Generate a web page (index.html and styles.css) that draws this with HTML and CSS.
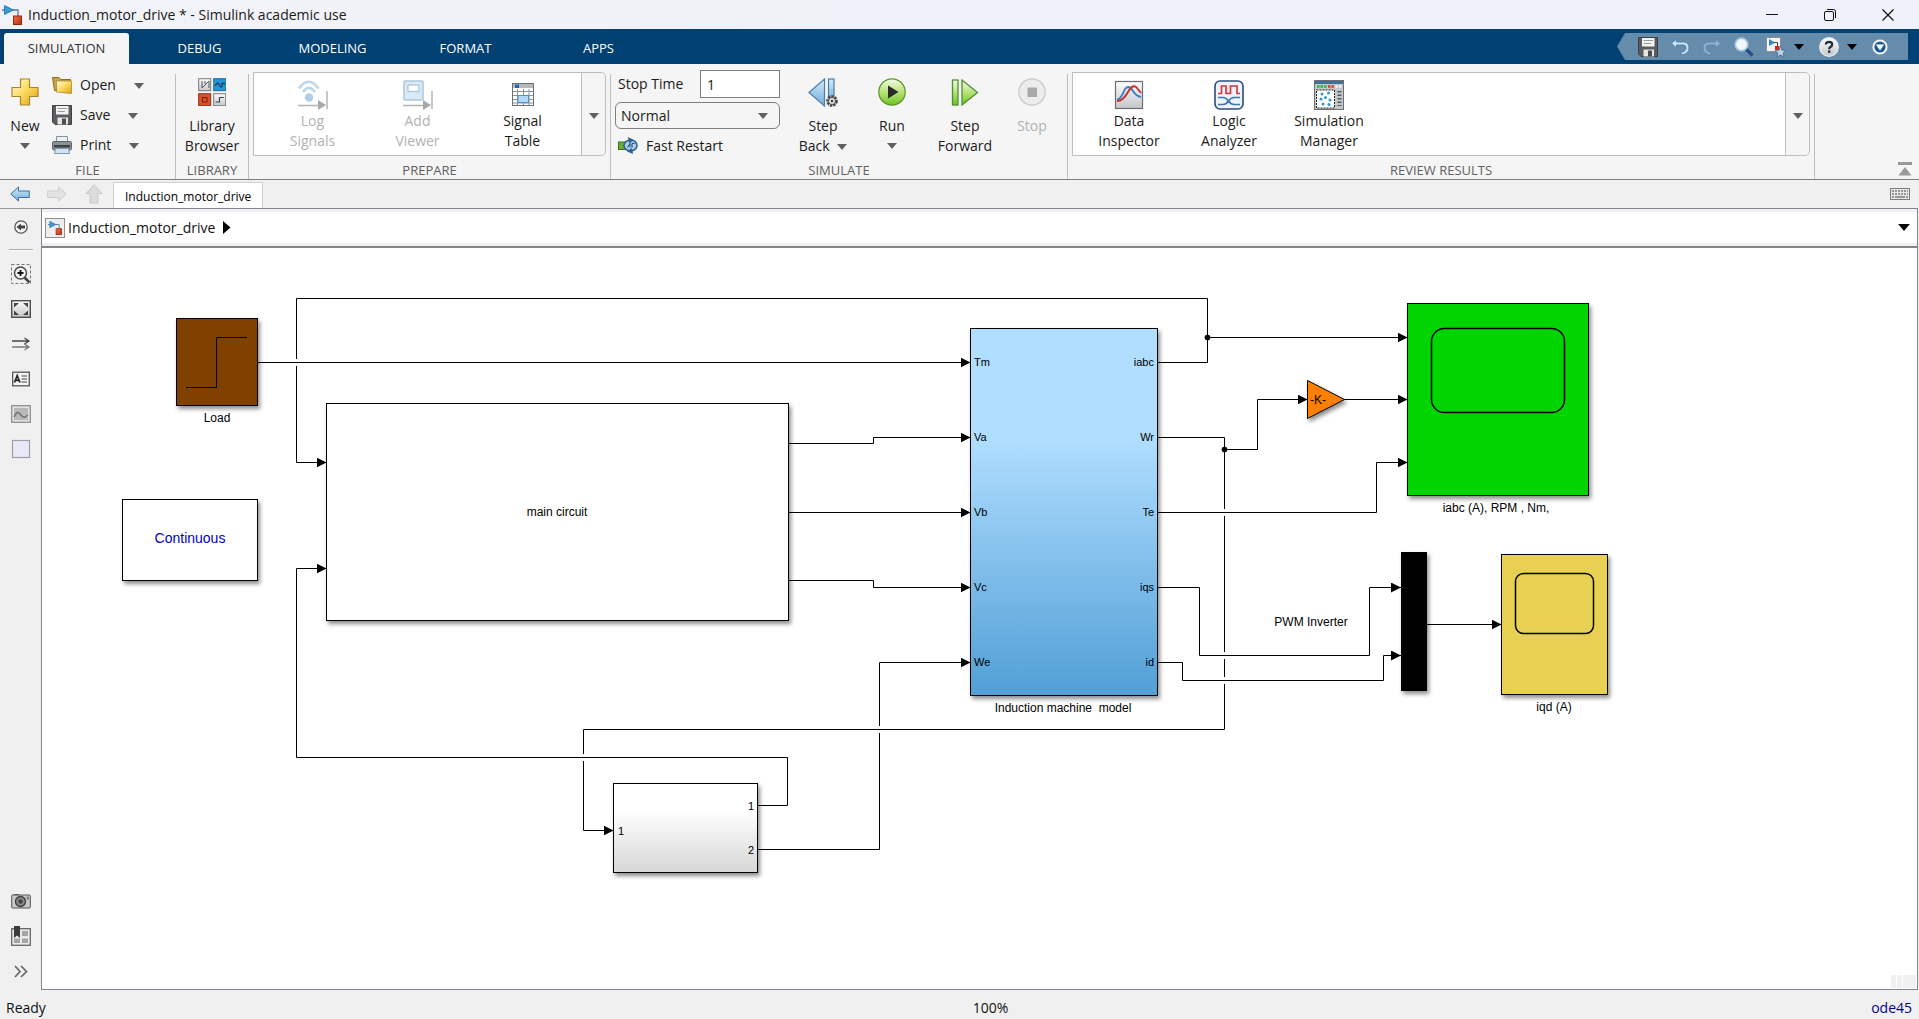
FILE: index.html
```html
<!DOCTYPE html>
<html lang="en">
<head>
<meta charset="utf-8">
<title>Induction_motor_drive * - Simulink academic use</title>
<link rel="stylesheet" href="styles.css">
</head>
<body>
<svg class="sprite" aria-hidden="true">
  <defs>
    <linearGradient id="gold" x1="0" y1="0" x2="1" y2="1"><stop offset="0" stop-color="#fffbd8"/><stop offset=".5" stop-color="#fbd85e"/><stop offset="1" stop-color="#e0a010"/></linearGradient>
    <linearGradient id="sky" x1="0" y1="0" x2="0" y2="1"><stop offset="0" stop-color="#d5ebfa"/><stop offset="1" stop-color="#6faede"/></linearGradient>
    <linearGradient id="leaf" x1="0" y1="0" x2="0" y2="1"><stop offset="0" stop-color="#f4fbe8"/><stop offset=".5" stop-color="#b9e27a"/><stop offset="1" stop-color="#6cc21f"/></linearGradient>
    <linearGradient id="steel" x1="0" y1="0" x2="0" y2="1"><stop offset="0" stop-color="#fdfdfd"/><stop offset="1" stop-color="#c4c6c9"/></linearGradient>
    <linearGradient id="red" x1="0" y1="0" x2="1" y2="1"><stop offset="0" stop-color="#f0714a"/><stop offset="1" stop-color="#b62f0c"/></linearGradient>
    <symbol id="caret" viewBox="0 0 10 6"><path d="M0 0H10L5 6Z" fill="currentColor"/></symbol>
    <symbol id="model" viewBox="0 0 20 20"><path d="M0 5H3M11 5H16V11" fill="none" stroke="#5c7a96" stroke-width="1.3"/><path d="M2.500 .5V9.500L11.500 5Z" fill="#3b9bd6" stroke="#1f6fa8" stroke-width=".8"/><rect x="11.500" y="11" width="8" height="8.500" fill="url(#red)" stroke="#8e2a10"/></symbol>
    <symbol id="disk" viewBox="0 0 20 20"><path d="M.5.500H19.500V19.500H3L.5 17Z" fill="#5a5c60" stroke="#3d3f42"/><rect x="4" y="1" width="12.500" height="8.500" fill="#f3f3f3"/><path d="M5.500 3.500H15M5.500 6.500H13" stroke="#9a9a9a"/><rect x="5.500" y="12.500" width="10.500" height="7" fill="#e6e6e6"/><rect x="10" y="13.500" width="4" height="6" fill="#4a4c50"/></symbol>
  </defs>
</svg>

<header class="titlebar">
  <svg class="app-icon"><use href="#model"/></svg>
  <h1 class="title">Induction_motor_drive * - Simulink academic use</h1>
  <div class="window-buttons">
    <button class="window-button" aria-label="Minimize"><svg viewBox="0 0 12 12"><path d="M0 5.500H12" stroke="#111"/></svg></button>
    <button class="window-button" aria-label="Restore"><svg viewBox="0 0 12 12"><rect x=".5" y="2.500" width="9" height="9" rx="1.500" fill="none" stroke="#111"/><path d="M3 .5H9.500Q11.500.5 11.500 2.500V9" fill="none" stroke="#111"/></svg></button>
    <button class="window-button" aria-label="Close"><svg viewBox="0 0 12 12"><path d="M.5.500 11.500 11.500M11.500.500.500 11.500" stroke="#111" stroke-width="1.200"/></svg></button>
  </div>
</header>

<nav class="ribbon-tabs">
  <button class="ribbon-tab active">SIMULATION</button>
  <button class="ribbon-tab">DEBUG</button>
  <button class="ribbon-tab">MODELING</button>
  <button class="ribbon-tab">FORMAT</button>
  <button class="ribbon-tab">APPS</button>
  <div class="quick-access">
    <button aria-label="Save"><svg class="icon-20"><use href="#disk"/></svg></button>
    <button aria-label="Undo"><svg class="icon-20" viewBox="0 0 20 20"><path d="M6.500 2 1.500 6.500 6.500 11V8H13.500Q16 8 16 11Q16 14.500 11 15.500V18Q19 17 19 11Q19 5.500 14 5H6.500Z" fill="#c9e2f6" stroke="#4779a5" stroke-width=".8"/></svg></button>
    <button aria-label="Redo"><svg class="icon-20" viewBox="0 0 20 20"><path d="M13.500 2 18.500 6.500 13.500 11V8H6.500Q4 8 4 11Q4 14.500 9 15.500V18Q1 17 1 11Q1 5.500 6 5H13.500Z" fill="#8fb0cb" stroke="#5c87ab" stroke-width=".8"/></svg></button>
    <button aria-label="Find"><svg class="icon-20" viewBox="0 0 20 20"><path d="M11.500 11.500 18.500 18.500" stroke="#234f86" stroke-width="3.200"/><circle cx="7.500" cy="7.500" r="6.300" fill="#f1f8fd" stroke="#a9c3d8" stroke-width="1.800"/></svg></button>
    <span class="split">
      <button aria-label="Favorites"><svg class="icon-20" viewBox="0 0 20 20"><rect x=".5" y=".5" width="14" height="14" fill="#f3f3f5" stroke="#8b8f94"/><path d="M3 2V9L9 5.500Z" fill="#2e87c6"/><path d="M8 5.500H11.500V9" stroke="#444" fill="none"/><rect x="9" y="9" width="4.500" height="4" fill="#cf2d12"/><path d="M14.500 9.500 16 13.300 20 13.600 17 16.100 18 20 14.500 17.800 11 20 12 16.100 9 13.600 13 13.300Z" fill="#bcd5ec" stroke="#3e6690" stroke-width=".7"/></svg></button>
      <button aria-label="Favorites menu"><svg class="caret"><use href="#caret"/></svg></button>
    </span>
    <span class="split">
      <button aria-label="Help"><svg class="icon-20" viewBox="0 0 20 20"><circle cx="10" cy="10" r="9.300" fill="url(#steel)" stroke="#e9f1f7" stroke-width="1.200"/><path d="M6.800 7.500Q7 4.800 10 4.800Q13.200 4.800 13.200 7.400Q13.200 9 11.300 10Q10.200 10.700 10.200 12.200" fill="none" stroke="#222b3a" stroke-width="2.200"/><rect x="9" y="13.400" width="2.400" height="2.400" fill="#222b3a"/></svg></button>
      <button aria-label="Help menu"><svg class="caret"><use href="#caret"/></svg></button>
    </span>
    <button aria-label="Customize"><svg class="icon-16" viewBox="0 0 16 16"><circle cx="8" cy="8" r="6.600" fill="#1d5a92" stroke="#f5f9fc" stroke-width="2"/><path d="M3.800 5.500H12.200L8 11.500Z" fill="#fff"/></svg></button>
  </div>
</nav>

<section class="toolstrip">
  <div class="group group-file">
    <div class="group-body">
      <button class="big-button new-button">
        <svg class="icon-28" viewBox="0 0 28 28"><path d="M9.500 1H18.500V9.500H27V18.500H18.500V27H9.500V18.500H1V9.500H9.500Z" fill="url(#gold)" stroke="#a8862c" stroke-width="1.200"/></svg>
        <span class="big-label">New</span><svg class="caret low"><use href="#caret"/></svg>
      </button>
      <div class="file-list">
        <div class="file-row">
          <button class="row-button"><svg class="icon-20" viewBox="0 0 20 20"><path d="M.5 2.500H7L9 4.500H18.500V17.500L2.500 15.500Z" fill="#c9a34a" stroke="#8a6d26"/><path d="M4.500 6H19.500V18.500L4.500 17Z" fill="url(#gold)" stroke="#a07f2c" stroke-width=".7"/></svg>Open</button>
          <button class="row-caret" aria-label="Open menu"><svg class="caret"><use href="#caret"/></svg></button>
        </div>
        <div class="file-row">
          <button class="row-button"><svg class="icon-20"><use href="#disk"/></svg>Save</button>
          <button class="row-caret" aria-label="Save menu"><svg class="caret"><use href="#caret"/></svg></button>
        </div>
        <div class="file-row">
          <button class="row-button"><svg class="icon-20" viewBox="0 0 20 20"><path d="M4.500 7V1.500H15.500V7" fill="#e7f1fa" stroke="#8794a0"/><rect x=".5" y="6.500" width="19" height="8.500" rx="1.500" fill="#8b9097" stroke="#5e6369"/><rect x="2" y="10" width="16" height="2.500" fill="#3e4247"/><path d="M3.500 13.500H16.500L17.500 18.500H2.500Z" fill="#cfe3f5" stroke="#7e97ad"/></svg>Print</button>
          <button class="row-caret" aria-label="Print menu"><svg class="caret"><use href="#caret"/></svg></button>
        </div>
      </div>
    </div>
    <h2 class="group-label">FILE</h2>
  </div>
  <div class="separator"></div>

  <div class="group group-library">
    <div class="group-body">
      <button class="big-button">
        <svg class="icon-28" viewBox="0 0 28 28"><rect x=".7" y=".7" width="12" height="12" fill="url(#steel)" stroke="#77797d"/><path d="M4 3V10L11 3V10M7 3V6" fill="none" stroke="#55585c"/><rect x="15.700" y=".7" width="12" height="12" fill="#2a94d2" stroke="#1b6fa6"/><path d="M17 7H18Q19.500 3 21 6.500T24 8.500V5.500H27" fill="none" stroke="#0e3f66" stroke-width="1.300"/><rect x=".7" y="15.700" width="12" height="12" fill="#d8532c" stroke="#8f3114"/><rect x="4.500" y="19.500" width="4.500" height="4.500" fill="none" stroke="#7a1e08"/><rect x="15.700" y="15.700" width="12" height="12" fill="url(#steel)" stroke="#77797d"/><path d="M17.500 24H21.500V19.500H26" fill="none" stroke="#44474b" stroke-width="1.200"/></svg>
        <span class="big-label">Library<br>Browser</span>
      </button>
    </div>
    <h2 class="group-label">LIBRARY</h2>
  </div>
  <div class="separator"></div>

  <div class="group group-prepare">
    <div class="group-body">
      <div class="gallery">
        <div class="gallery-items">
          <button class="gallery-item" disabled>
            <svg class="icon-30" viewBox="0 0 30 30"><path d="M1 8.500Q10.500-5 20.500 8.500M5 12Q10.500 3.500 17 12" fill="none" stroke="#bcd6ea" stroke-width="2.600"/><circle cx="11" cy="17.500" r="4.200" fill="#b1d0e8"/><path d="M0 25.500H21" stroke="#b4b4b4" stroke-width="1.500"/><path d="M20 20V30L28 25Z" fill="#a8a8a8"/><path d="M29 11V29" stroke="#b4b4b4" stroke-width="1.500"/></svg>
            <span>Log<br>Signals</span>
          </button>
          <button class="gallery-item" disabled>
            <svg class="icon-30" viewBox="0 0 30 30"><rect x="1" y="1" width="19" height="19" rx="1" fill="#d9e9f5" stroke="#aac6dd" stroke-width="1.500"/><rect x="5" y="5" width="11" height="6.500" fill="#fff" stroke="#aac6dd" stroke-width="1.300"/><path d="M0 25.500H21" stroke="#b4b4b4" stroke-width="1.500"/><path d="M20 20V30L28 25Z" fill="#a8a8a8"/><path d="M29 11V29" stroke="#b4b4b4" stroke-width="1.500"/></svg>
            <span>Add<br>Viewer</span>
          </button>
          <button class="gallery-item">
            <svg class="icon-30" viewBox="0 0 30 30"><rect x="4.500" y="3.500" width="21" height="22" fill="#fff" stroke="#6c6f73"/><rect x="5" y="4" width="20" height="4" fill="#b5b8bd"/><rect x="7" y="4.500" width="4" height="3.500" fill="#1c6bb5"/><path d="M5 11.500H25M5 15.500H25M5 19.500H25M5 23H25M9.500 9V25M15.500 9V25M21 9V25" stroke="#8f9296"/><rect x="10" y="15.500" width="10.500" height="7" fill="#b4d8f8" stroke="#4f93d2"/></svg>
            <span>Signal<br>Table</span>
          </button>
        </div>
        <button class="gallery-more" aria-label="More prepare tools"><svg class="caret"><use href="#caret"/></svg></button>
      </div>
    </div>
    <h2 class="group-label">PREPARE</h2>
  </div>
  <div class="separator"></div>

  <div class="group group-simulate">
    <div class="group-body">
      <div class="run-settings">
        <div class="stop-row"><label for="stop-time">Stop Time</label><input id="stop-time" type="text" value="1"></div>
        <div class="mode">
          <select aria-label="Simulation mode"><option>Normal</option><option>Accelerator</option></select>
          <svg class="caret"><use href="#caret"/></svg>
        </div>
        <button class="fast-restart"><svg class="icon-20" viewBox="0 0 20 20"><rect x=".5" y="6" width="7" height="7.500" fill="#6fae2c" stroke="#41701a"/><ellipse cx="12.500" cy="9.500" rx="6.500" ry="5.500" fill="#a9cdea" stroke="#2c6290" stroke-width="1.600"/><path d="M10 1 16 4 11 7.500ZM15 18 9 15.500 14 12Z" fill="#2c6290"/><path d="M9.500 11.500 12 7.500V11.500M14 11.500V7.500H16.500" fill="none" stroke="#1d4870"/></svg>Fast Restart</button>
      </div>
      <button class="big-button step-back">
        <svg class="icon-30" viewBox="0 0 30 30"><path d="M1 14.500 16.500 1V28Z" fill="url(#sky)" stroke="#4d7da6" stroke-width="1.200"/><rect x="20.500" y="1" width="5.500" height="22" fill="url(#sky)" stroke="#4d7da6" stroke-width="1.200"/><circle cx="24" cy="23" r="4.600" fill="#ddd" stroke="#444" stroke-width="2.400" stroke-dasharray="2.400 1"/><circle cx="24" cy="23" r="3.500" fill="#eee" stroke="#444"/><circle cx="24" cy="23" r="1.300" fill="#333"/></svg>
        <span class="big-label">Step<br>Back <svg class="caret inline"><use href="#caret"/></svg></span>
      </button>
      <button class="big-button run">
        <svg class="icon-28" viewBox="0 0 28 28"><circle cx="14" cy="14" r="13.200" fill="url(#leaf)" stroke="#5c9a2c" stroke-width="1.300"/><path d="M10 7.500V20.500L20.500 14Z" fill="#2b2b2b"/></svg>
        <span class="big-label">Run</span><svg class="caret low"><use href="#caret"/></svg>
      </button>
      <button class="big-button step-forward">
        <svg class="icon-28" viewBox="0 0 28 28"><rect x="1.500" y="2" width="5.500" height="25" fill="url(#leaf)" stroke="#4f8f34" stroke-width="1.300"/><path d="M11 2V27L26.500 14.500Z" fill="url(#leaf)" stroke="#4f8f34" stroke-width="1.300"/></svg>
        <span class="big-label">Step<br>Forward</span>
      </button>
      <button class="big-button stop" disabled>
        <svg class="icon-28" viewBox="0 0 28 28"><circle cx="14" cy="14" r="13.200" fill="#ececec" stroke="#c9c9c9" stroke-width="1.300"/><rect x="9.500" y="9.500" width="9.500" height="9.500" fill="#a9a9a9"/></svg>
        <span class="big-label">Stop</span>
      </button>
    </div>
    <h2 class="group-label">SIMULATE</h2>
  </div>
  <div class="separator"></div>

  <div class="group group-review">
    <div class="group-body">
      <div class="gallery">
        <div class="gallery-items">
          <button class="gallery-item">
            <svg class="icon-30" viewBox="0 0 30 30"><rect x="1.500" y="1.500" width="27" height="27" fill="url(#steel)" stroke="#6b6d70" stroke-width="1.200"/><path d="M3 20Q7 19 11 9Q15 4 19 11Q22 16 27 17" fill="none" stroke="#3a82c4" stroke-width="2"/><path d="M3 21Q9 21 14 12Q19 3 23 8L27 13" fill="none" stroke="#cc3131" stroke-width="2"/></svg>
            <span>Data<br>Inspector</span>
          </button>
          <button class="gallery-item">
            <svg class="icon-30" viewBox="0 0 30 30"><rect x="1" y="1" width="28" height="28" rx="5" fill="#eef3fb" stroke="#2c4b80" stroke-width="1.600"/><path d="M4 13.500H7.500V6H12V13.500H16.500V6H23V13.500H26" fill="none" stroke="#cf3a3a" stroke-width="1.700"/><path d="M4 17.500H9Q12 17.500 14.500 21T20 24.500H26M4 24.500H9Q12 24.500 14.500 21T20 17.500H26" fill="none" stroke="#3b78b8" stroke-width="1.700"/></svg>
            <span>Logic<br>Analyzer</span>
          </button>
          <button class="gallery-item">
            <svg class="icon-30" viewBox="0 0 30 30"><rect x=".5" y=".5" width="29" height="29" fill="#c5c8cb" stroke="#6b6e72"/><rect x="1" y="1" width="28" height="3" fill="#3f7099"/><path d="M3 6.500H13" stroke="#2ab53a" stroke-width="2.500" stroke-dasharray="2.500 1"/><path d="M14 6.500H20" stroke="#e03a2a" stroke-width="2.500" stroke-dasharray="2.500 1"/><path d="M21.500 6.500H27.500" stroke="#eee" stroke-width="2.500" stroke-dasharray="2.500 1"/><rect x="2.500" y="10" width="18" height="18" fill="#fff" stroke="#222" stroke-dasharray="2 1"/><g fill="#2f96d8"><circle cx="8" cy="14" r="1.500"/><circle cx="14.500" cy="13" r="1.500"/><circle cx="11.500" cy="17.500" r="1.500"/><circle cx="7" cy="19" r="1.500"/><circle cx="16" cy="20" r="1.500"/><circle cx="9" cy="24" r="1.500"/><circle cx="15" cy="24.500" r="1.500"/></g><path d="M25.500 11V26" stroke="#55585c" stroke-width="4" stroke-dasharray="1.500 2"/></svg>
            <span>Simulation<br>Manager</span>
          </button>
        </div>
        <button class="gallery-more" aria-label="More review tools"><svg class="caret"><use href="#caret"/></svg></button>
      </div>
    </div>
    <h2 class="group-label">REVIEW RESULTS</h2>
  </div>
  <div class="separator"></div>
  <div class="toolstrip-tail">
    <button aria-label="Collapse toolstrip"><svg class="icon-14" viewBox="0 0 14 14"><path d="M0 0H14V3H0ZM7 5 13.500 13.500H.5Z" fill="#9a9a9a"/></svg></button>
  </div>
</section>

<nav class="document-bar">
  <button class="nav-button" aria-label="Back"><svg class="icon-20" viewBox="0 0 20 20"><path d="M.7 10 8.500 3V7H19.300V13.500H8.500V17Z" fill="url(#sky)" stroke="#3f6e98"/></svg></button>
  <button class="nav-button" aria-label="Forward" disabled><svg class="icon-20" viewBox="0 0 20 20"><path d="M19.300 10 11.500 3V7H.7V13.500H11.500V17Z" fill="#e2e2e2" stroke="#cdcdcd"/></svg></button>
  <button class="nav-button" aria-label="Up" disabled><svg class="icon-20" viewBox="0 0 20 20"><path d="M10 .7 18 9.500H14V19H6V9.500H2Z" fill="#dcdcdc" stroke="#c8c8c8"/></svg></button>
  <a class="document-tab" href="#">Induction_motor_drive</a>
  <button class="keyboard" aria-label="Keyboard shortcuts"><svg viewBox="0 0 20 12"><rect x=".5" y=".5" width="19" height="11" fill="#e8e8e8" stroke="#7b7b7b"/><path d="M2 3H18M2 6H18" stroke="#7b7b7b" stroke-width="1.500" stroke-dasharray="2 1"/><path d="M2 9H4M5 9H15M16 9H18" stroke="#7b7b7b" stroke-width="1.500"/></svg></button>
</nav>

<main class="editor">
  <aside class="palette">
    <button class="tool" aria-label="Hide browser"><svg class="icon-14" viewBox="0 0 14 14"><circle cx="7" cy="7" r="6.200" fill="#f6f6f6" stroke="#555" stroke-width="1.300"/><path d="M2.500 7 7 3.500V5.500H11V8.500H7V10.500Z" fill="#444"/></svg></button>
    <hr class="palette-rule">
    <button class="tool" aria-label="Zoom"><svg class="icon-20" viewBox="0 0 20 20"><rect x=".5" y=".5" width="19" height="19" fill="none" stroke="#777" stroke-dasharray="3 2"/><path d="M13.500 13.500 18.500 18.500" stroke="#444" stroke-width="2.500"/><circle cx="9.500" cy="9" r="6" fill="#f4f4f4" stroke="#4c4c4c" stroke-width="1.500"/><path d="M6.500 9H12.500M9.500 6V12" stroke="#111" stroke-width="1.800"/></svg></button>
    <button class="tool" aria-label="Fit to view"><svg class="icon-20" viewBox="0 0 20 20"><rect x=".7" y="1.700" width="18.600" height="16.600" fill="url(#steel)" stroke="#4e4e4e" stroke-width="1.400"/><path d="M3 4H8L3 8.500ZM17 4H12L17 8.500ZM3 16H8L3 11.500ZM17 16H12L17 11.500Z" fill="#444"/></svg></button>
    <button class="tool" aria-label="Signal routing"><svg class="icon-20" viewBox="0 0 20 20"><path d="M1 7H17M13.500 4 18 7 13.500 10" fill="none" stroke="#444" stroke-width="1.300"/><path d="M1 13H17M13.500 10 18 13 13.500 16" fill="none" stroke="#777" stroke-width="1.300"/></svg></button>
    <button class="tool" aria-label="Annotation"><svg class="icon-20" viewBox="0 0 20 20"><rect x="1.700" y="3.200" width="16.600" height="13.600" fill="#f5f5f5" stroke="#555" stroke-width="1.300"/><path d="M3.500 13.500 6.200 6.500 9 13.500M4.500 11.300H8" fill="none" stroke="#222" stroke-width="1.700"/><path d="M10.500 7H16M10.500 10H16M10.500 13H16" stroke="#444" stroke-width="1.200"/></svg></button>
    <button class="tool" aria-label="Image"><svg class="icon-20" viewBox="0 0 20 20"><rect x=".7" y="1.700" width="18.600" height="16.600" fill="#e2e2e2" stroke="#8b8b8b" stroke-width="1.200"/><rect x="3" y="4" width="14" height="12" fill="#b9b9b9"/><path d="M3 13Q6 6 9 10T14 13L17 11" fill="none" stroke="#737373" stroke-width="1.500"/></svg></button>
    <button class="tool" aria-label="Area"><svg class="icon-20" viewBox="0 0 20 20"><rect x="1.500" y="1.500" width="17" height="17" fill="#e9e8f7" stroke="#9f9faa" stroke-width="1.200"/></svg></button>
    <span class="palette-space"></span>
    <button class="tool" aria-label="Screenshot"><svg class="icon-20" viewBox="0 0 20 20"><path d="M3 3H8V5H3Z" fill="#666"/><rect x=".7" y="4" width="18.600" height="13" rx="1" fill="#c9c9c9" stroke="#555"/><circle cx="9.500" cy="10.500" r="5" fill="#8a8a8a" stroke="#3f3f3f" stroke-width="1.300"/><circle cx="9.500" cy="10.500" r="2.200" fill="#444"/><rect x="15.500" y="5.500" width="2.500" height="3" fill="#888"/></svg></button>
    <button class="tool" aria-label="Bookmarks"><svg class="icon-20" viewBox="0 0 20 20"><rect x=".7" y="2.700" width="18.600" height="16.600" fill="#eaeaea" stroke="#666" stroke-width="1.300"/><path d="M11 5H17V10H11ZM11 12.500H17V17H11ZM3 12.500H9V17H3Z" fill="#a5a5a5"/><path d="M3 0H9V12L6 9.500 3 12Z" fill="#3a3a3a"/></svg></button>
    <button class="tool" aria-label="More"><svg class="icon-20" viewBox="0 0 20 20"><path d="M4 5 9 10.500 4 16M10 5 15.500 10.500 10 16" fill="none" stroke="#666" stroke-width="1.700"/></svg></button>
  </aside>

  <section class="workspace">
    <nav class="breadcrumb">
      <a class="crumb" href="#"><svg class="crumb-icon"><use href="#model"/></svg>Induction_motor_drive</a>
      <svg class="crumb-arrow" viewBox="0 0 8 14"><path d="M0 0V13L7.500 6.500Z"/></svg>
      <button class="crumb-menu" aria-label="Path history"><svg class="caret"><use href="#caret"/></svg></button>
    </nav>

    <div class="canvas">
      <svg class="diagram" role="img" aria-label="Induction motor drive block diagram">
        <defs>
          <linearGradient id="machine" x1="0" y1="0" x2="0" y2="1"><stop offset=".3" stop-color="#b0deff"/><stop offset="1" stop-color="#519fd6"/></linearGradient>
          <linearGradient id="subsystem" x1="0" y1="0" x2="0" y2="1"><stop offset=".3" stop-color="#fff"/><stop offset="1" stop-color="#d6d6d6"/></linearGradient>
          <marker id="arrow" markerUnits="userSpaceOnUse" markerWidth="10" markerHeight="10" refX="10" refY="5" orient="auto"><path d="M0 0 10 5 0 10Z"/></marker>
        </defs>
        <g transform="translate(-42 -248)">
          <g class="wires">
            <path marker-end="url(#arrow)" d="M1157.500 362.500H1207.500V298.500H296.500V462.500H326.500"/>
            <path marker-end="url(#arrow)" d="M1157.500 437.500H1224.500V729.500H583.500V830.500H613.500"/>
            <path marker-end="url(#arrow)" d="M757.500 849.500H879.500V662.500H970.500"/>
          </g>
          <g class="gaps">
            <path d="M296.500 359V366M1224.500 509V516M1224.500 652V659M1224.500 677V684M583.500 754V761M879.500 726V733"/>
          </g>
          <g class="wires">
            <path d="M876 729.500H884"/>
            <path marker-end="url(#arrow)" d="M258 362.500H970.500"/>
            <path marker-end="url(#arrow)" d="M788 443.500H873.500V437.500H970.500"/>
            <path marker-end="url(#arrow)" d="M788 512.500H970.500"/>
            <path marker-end="url(#arrow)" d="M788 580.500H873.500V587.500H970.500"/>
            <path marker-end="url(#arrow)" d="M757.500 805.500H787.500V757.500H296.500V568.500H326.500"/>
            <path marker-end="url(#arrow)" d="M1207.500 337.500H1407.500"/>
            <path marker-end="url(#arrow)" d="M1224.500 449.500H1257.500V399.500H1307.500"/>
            <path marker-end="url(#arrow)" d="M1344 399.500H1407.500"/>
            <path marker-end="url(#arrow)" d="M1157.500 512.500H1376.500V462.500H1407.500"/>
            <path marker-end="url(#arrow)" d="M1157.500 587.500H1199.500V655.500H1369.500V587.500H1401"/>
            <path marker-end="url(#arrow)" d="M1157.500 662.500H1182.500V680.500H1383.500V655.500H1401"/>
            <path marker-end="url(#arrow)" d="M1427 624.500H1501.500"/>
            <circle cx="1207.500" cy="337.500" r="2.500"/>
            <circle cx="1224.500" cy="449.500" r="2.500"/>
          </g>

          <g class="block"><rect x="176.500" y="318.500" width="81" height="87" fill="#804000"/></g>
          <path class="glyph" d="M186 387.500H216.500V337.500H247"/>
          <g class="block"><rect x="122.500" y="499.500" width="135" height="81" fill="#fff"/></g>
          <g class="block"><rect x="326.500" y="403.500" width="462" height="217" fill="#fff"/></g>
          <g class="block"><rect x="970.500" y="328.500" width="187" height="367" fill="url(#machine)"/></g>
          <g class="block"><rect x="613.500" y="783.500" width="144" height="89" fill="url(#subsystem)"/></g>
          <g class="block"><path d="M1307.500 380.500V418.500L1344.500 399.500Z" fill="#ff8000"/></g>
          <g class="block"><rect x="1407.500" y="303.500" width="181" height="192" fill="#00d500"/></g>
          <rect class="screen" x="1431.500" y="328.500" width="133" height="84" rx="13"/>
          <g class="block"><rect x="1401.500" y="552.500" width="25" height="138" fill="#000"/></g>
          <g class="block"><rect x="1501.500" y="554.500" width="106" height="140" fill="#e8d152"/></g>
          <rect class="screen" x="1515.500" y="573.500" width="78" height="60" rx="8"/>

          <g class="block-name">
            <text x="217" y="422">Load</text>
            <text x="557" y="516">main circuit</text>
            <text class="preserve" x="1063" y="712">Induction machine  model</text>
            <text x="1311" y="626">PWM Inverter</text>
            <text x="1496" y="512">iabc (A), RPM , Nm,</text>
            <text x="1554" y="711">iqd (A)</text>
            <text x="1318" y="404">-K-</text>
          </g>
          <text class="solver-text" x="190" y="543">Continuous</text>
          <g class="port">
            <text x="974" y="366">Tm</text><text x="974" y="441">Va</text><text x="974" y="516">Vb</text><text x="974" y="591">Vc</text><text x="974" y="666">We</text>
            <text x="618" y="835">1</text>
          </g>
          <g class="port out">
            <text x="1154" y="366">iabc</text><text x="1154" y="441">Wr</text><text x="1154" y="516">Te</text><text x="1154" y="591">iqs</text><text x="1154" y="666">id</text>
            <text x="754" y="810">1</text><text x="754" y="854">2</text>
          </g>
        </g>
      </svg>
      <div class="canvas-corner"><span></span><span></span><span class="wide"></span></div>
    </div>
  </section>
</main>

<footer class="statusbar">
  <span>Ready</span>
  <span class="zoom-level">100%</span>
  <a class="solver" href="#">ode45</a>
</footer>
</body>
</html>
```
FILE: styles.css
```css
* { box-sizing: border-box; }

body {
  margin: 0;
  min-height: 100vh;
  display: flex;
  flex-direction: column;
  background: #f0f0f0;
  color: #1a1a1a;
  font: 14px/20px "Open Sans", "Noto Sans", sans-serif;
}

button {
  border: 0;
  padding: 0;
  background: none;
  color: inherit;
  font: inherit;
}

button:disabled { color: #b2b2b2; }
svg { display: block; flex: none; }
a { color: inherit; text-decoration: none; }
h1, h2 { margin: 0; font-weight: 400; }

.sprite { position: absolute; width: 0; height: 0; }
.icon-14 { width: 14px; height: 14px; }
.icon-16 { width: 16px; height: 16px; }
.icon-20 { width: 20px; height: 20px; }
.icon-28 { width: 28px; height: 28px; }
.icon-30 { width: 30px; height: 30px; }
.caret { width: 10px; height: 6px; color: #606060; }

/* Title bar */
.titlebar {
  display: flex;
  align-items: center;
  height: 29px;
  padding: 0 2px;
  background: linear-gradient(90deg, #f2f3f8, #eff2fb);
}
.app-icon { width: 20px; height: 20px; }
.title { margin-left: 6px; font-size: 14px; line-height: 20px; }
.window-buttons { display: flex; margin-left: auto; }
.window-button { width: 58px; height: 28px; display: grid; place-items: center; }
.window-button svg { width: 12px; height: 12px; }

/* Ribbon tabs */
.ribbon-tabs {
  display: flex;
  gap: 8px;
  height: 35px;
  padding: 4px 11px 0 4px;
  background: #004073;
  color: #fff;
  font-size: 13px;
}
.ribbon-tab { width: 125px; height: 31px; padding-bottom: 2px; }
.ribbon-tab.active { border-radius: 3px 3px 0 0; background: #f5f5f5; color: #333; }
.quick-access {
  display: flex;
  align-items: center;
  gap: 12px;
  height: 27px;
  margin-left: auto;
  padding: 0 20px 0 21px;
  background: #668cac;
  clip-path: polygon(0 50%, 8px 0, 100% 0, 100% 100%, 8px 100%);
}
.split { display: flex; align-items: center; gap: 8px; margin-right: 3px; }
.quick-access .caret { color: #000; }

/* Toolstrip */
.toolstrip {
  display: flex;
  height: 116px;
  border-bottom: 1px solid #7f7f7f;
  background: #f5f5f5;
}
.separator { flex: none; width: 1px; margin-top: 10px; background: #bdbdbd; }
.group { display: flex; flex-direction: column; flex: none; padding-top: 6px; }
.group-file { width: 175px; }
.group-library { width: 72px; }
.group-prepare { width: 361px; }
.group-simulate { width: 456px; }
.group-review { flex: 1; }
.group-body { display: flex; height: 92px; }
.group-label {
  color: #606060;
  font-size: 13px;
  line-height: 18px;
  text-align: center;
}

.big-button {
  display: flex;
  flex-direction: column;
  align-items: center;
  padding-top: 8px;
}
.big-label { height: 40px; margin-top: 10px; line-height: 20px; }
.icon-30 + .big-label { margin-top: 8px; }
.caret.low { margin-top: -13px; }
.caret.inline { display: inline-block; margin-left: 4px; vertical-align: middle; }
.new-button { width: 50px; margin-right: 2px; }
.group-library .big-button { width: 72px; }
.step-back { width: 72px; margin-left: 7px; }
.run { width: 66px; }
.step-forward { width: 80px; }
.stop { width: 54px; }

.file-row { display: flex; align-items: center; height: 30px; }
.row-button { display: flex; align-items: center; gap: 8px; }
.row-caret { padding: 2px 0 0 18px; }

.gallery {
  display: flex;
  flex: 1;
  height: 84px;
  margin: 2px 4px 0;
  border: 1px solid #bdbdbd;
  border-radius: 0 5px 5px 0;
  background: #fff;
}
.gallery-items { display: flex; flex: 1; padding-left: 6px; }
.gallery-item {
  display: flex;
  flex-direction: column;
  align-items: center;
  gap: 1px;
  width: 100px;
  padding-top: 7px;
}
.group-prepare .gallery-item { width: 105px; }
.gallery-more {
  display: grid;
  place-items: center;
  width: 24px;
  padding-top: 3px;
  border-left: 1px solid #bdbdbd;
  border-radius: 0 5px 5px 0;
  background: #f5f5f5;
}

.run-settings { display: flex; flex-direction: column; gap: 4px; width: 165px; margin-left: 4px; }
.stop-row { display: flex; align-items: center; justify-content: space-between; height: 28px; padding-left: 3px; }
.stop-row input {
  width: 80px;
  height: 28px;
  padding: 0 6px;
  border: 1px solid #7f7f7f;
  background: #fff;
  color: inherit;
  font: inherit;
}
.mode { display: grid; align-items: center; height: 27px; }
.mode > * { grid-area: 1 / 1; }
.mode select {
  width: 100%;
  height: 27px;
  padding: 0 5px;
  appearance: none;
  border: 1px solid #7f7f7f;
  border-radius: 6px;
  background: #f5f5f5;
  color: inherit;
  font: inherit;
}
.mode .caret { justify-self: end; margin-right: 12px; pointer-events: none; }
.fast-restart { display: flex; align-items: center; gap: 8px; height: 26px; padding-left: 3px; }

.toolstrip-tail { display: flex; flex: none; align-items: flex-end; justify-content: flex-end; width: 104px; padding: 0 7px 3px 0; }

/* Document bar */
.document-bar {
  display: flex;
  align-items: center;
  height: 28px;
  padding: 0 9px 0 10px;
}
.nav-button { margin-right: 17px; }
.document-tab {
  align-self: flex-end;
  height: 26px;
  margin-left: -8px;
  padding: 0 11px;
  border: 1px solid #d0d0d0;
  border-bottom: 0;
  background: #fff;
  color: #000;
  font-size: 12px;
  line-height: 28px;
}
.keyboard { margin-left: auto; }
.keyboard svg { width: 20px; height: 12px; }

/* Editor */
.editor { display: flex; flex: 1; }
.palette {
  display: flex;
  flex-direction: column;
  align-items: center;
  width: 41px;
  padding-bottom: 2px;
  border-top: 1px solid #9a9a9a;
}
.tool { display: grid; place-items: center; width: 35px; height: 35px; }
.palette-rule { width: 24px; margin: 5px 0; border: 0; border-top: 1px solid #aaa; border-bottom: 1px solid #fff; }
.palette-space { flex: 1; }

.workspace {
  display: flex;
  flex: 1;
  flex-direction: column;
  margin-right: 1px;
  border: 1px solid #82858f;
}
.breadcrumb {
  display: flex;
  align-items: center;
  height: 39px;
  padding: 3px 3px 3px;
  border-bottom: 2px solid #82858f;
  background: #fff;
  box-shadow: inset 0 3px #f0f0f0, inset 0 -3px #f0f0f0;
}
.crumb { display: flex; align-items: center; gap: 3px; color: #111; }
.crumb-icon { width: 20px; height: 20px; padding: 2px; border: 1px solid #8f8f8f; background: #eee; }
.crumb-arrow { width: 8px; height: 14px; margin-left: 8px; }
.crumb-menu { margin-left: auto; padding-right: 4px; }
.crumb-menu .caret { width: 12px; height: 7px; color: #000; }

.canvas { position: relative; display: flex; flex: 1; background: #fff; }
.diagram { flex: 1; width: 100%; min-height: 640px; font-family: "Liberation Sans", Arial, sans-serif; }
.wires path { fill: none; stroke: #000; }
.wires circle { stroke: #000; }
.gaps path { fill: none; stroke: #fff; stroke-width: 3; }
.block { filter: drop-shadow(2px 3px 2px rgb(0 0 0 / 45%)); }
.block > * { stroke: #000; }
.glyph { fill: none; stroke: #000; }
.screen { fill: none; stroke: #000; stroke-width: 1.5; }
.block-name { font-size: 12px; text-anchor: middle; }
.preserve { white-space: pre; }
.solver-text { font-size: 14px; fill: #0000c8; text-anchor: middle; }
.port { font-size: 11px; }
.out { text-anchor: end; }
.canvas-corner { position: absolute; right: 1px; bottom: 1px; display: flex; gap: 1px; }
.canvas-corner span { width: 5px; height: 13px; background: #f0f0f0; }
.canvas-corner .wide { width: 13px; }

/* Status bar */
.statusbar {
  display: grid;
  grid-template-columns: 1fr auto 1fr;
  align-items: center;
  height: 29px;
  padding: 6px 7px 0 6px;
  color: #111;
}
.zoom-level { padding-left: 63px; }
.solver { justify-self: end; color: #00008b; }
```
